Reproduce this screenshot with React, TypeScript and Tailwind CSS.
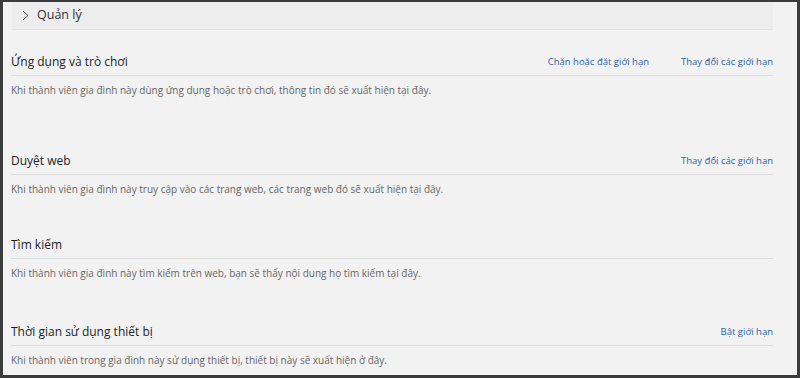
import React from "react";

interface Section {
    title: string;
    desc: string;
    links: string[];
    gap: string;
}

const sections: Section[] = [
    {
        title: "Ứng dụng và trò chơi",
        desc: "Khi thành viên gia đình này dùng ứng dụng hoặc trò chơi, thông tin đó sẽ xuất hiện tại đây.",
        links: ["Chặn hoặc đặt giới hạn", "Thay đổi các giới hạn"],
        gap: "mt-[18px]",
    },
    {
        title: "Duyệt web",
        desc: "Khi thành viên gia đình này truy cập vào các trang web, các trang web đó sẽ xuất hiện tại đây.",
        links: ["Thay đổi các giới hạn"],
        gap: "mt-[50px]",
    },
    {
        title: "Tìm kiếm",
        desc: "Khi thành viên gia đình này tìm kiếm trên web, bạn sẽ thấy nội dung họ tìm kiếm tại đây.",
        links: [],
        gap: "mt-[35px]",
    },
    {
        title: "Thời gian sử dụng thiết bị",
        desc: "Khi thành viên trong gia đình này sử dụng thiết bị, thiết bị này sẽ xuất hiện ở đây.",
        links: ["Bật giới hạn"],
        gap: "mt-[38px]",
    },
];

function ChevronRight() {
    return (
        <svg width="7" height="11" viewBox="0 0 7 11" fill="none" className="shrink-0">
            <polyline points="1,1 6,5.5 1,10" stroke="#555" strokeWidth="1" />
        </svg>
    );
}

export default function App() {
    return (
        <div
            className="w-[800px] h-[378px] overflow-hidden bg-[#f2f2f2] border-l-[3px] border-r-[3px] border-t-2 border-b-[3px] border-[#3b3b3b]"
            style={{ fontFamily: '"Open Sans", "Noto Sans", sans-serif' }}
        >
            {/* Collapsed "Quản lý" header */}
            <div className="ml-[9px] mr-[24px] h-[28px] bg-[#ededed] border-b border-[#e2e2e2] flex items-center gap-[8px] pl-[10px]">
                <ChevronRight />
                <span className="text-[12.5px] text-[#333]">Quản lý</span>
            </div>

            <div className="pl-[8px] pr-[24px]">
                {sections.map((s) => (
                    <section key={s.title} className={s.gap}>
                        <div className="h-[28px] pt-[1px] flex items-center justify-between border-b border-[#dedede]">
                            <h3 className="text-[12px] text-[#1f1f1f] leading-none">{s.title}</h3>
                            <div className="flex items-center gap-[32px]">
                                {s.links.map((l) => (
                                    <a key={l} className="text-[9.5px] text-[#2a64a6] leading-none">
                                        {l}
                                    </a>
                                ))}
                            </div>
                        </div>
                        <p className="mt-[7px] text-[10px] leading-[14px] text-[#666]">{s.desc}</p>
                    </section>
                ))}
            </div>
        </div>
    );
}
